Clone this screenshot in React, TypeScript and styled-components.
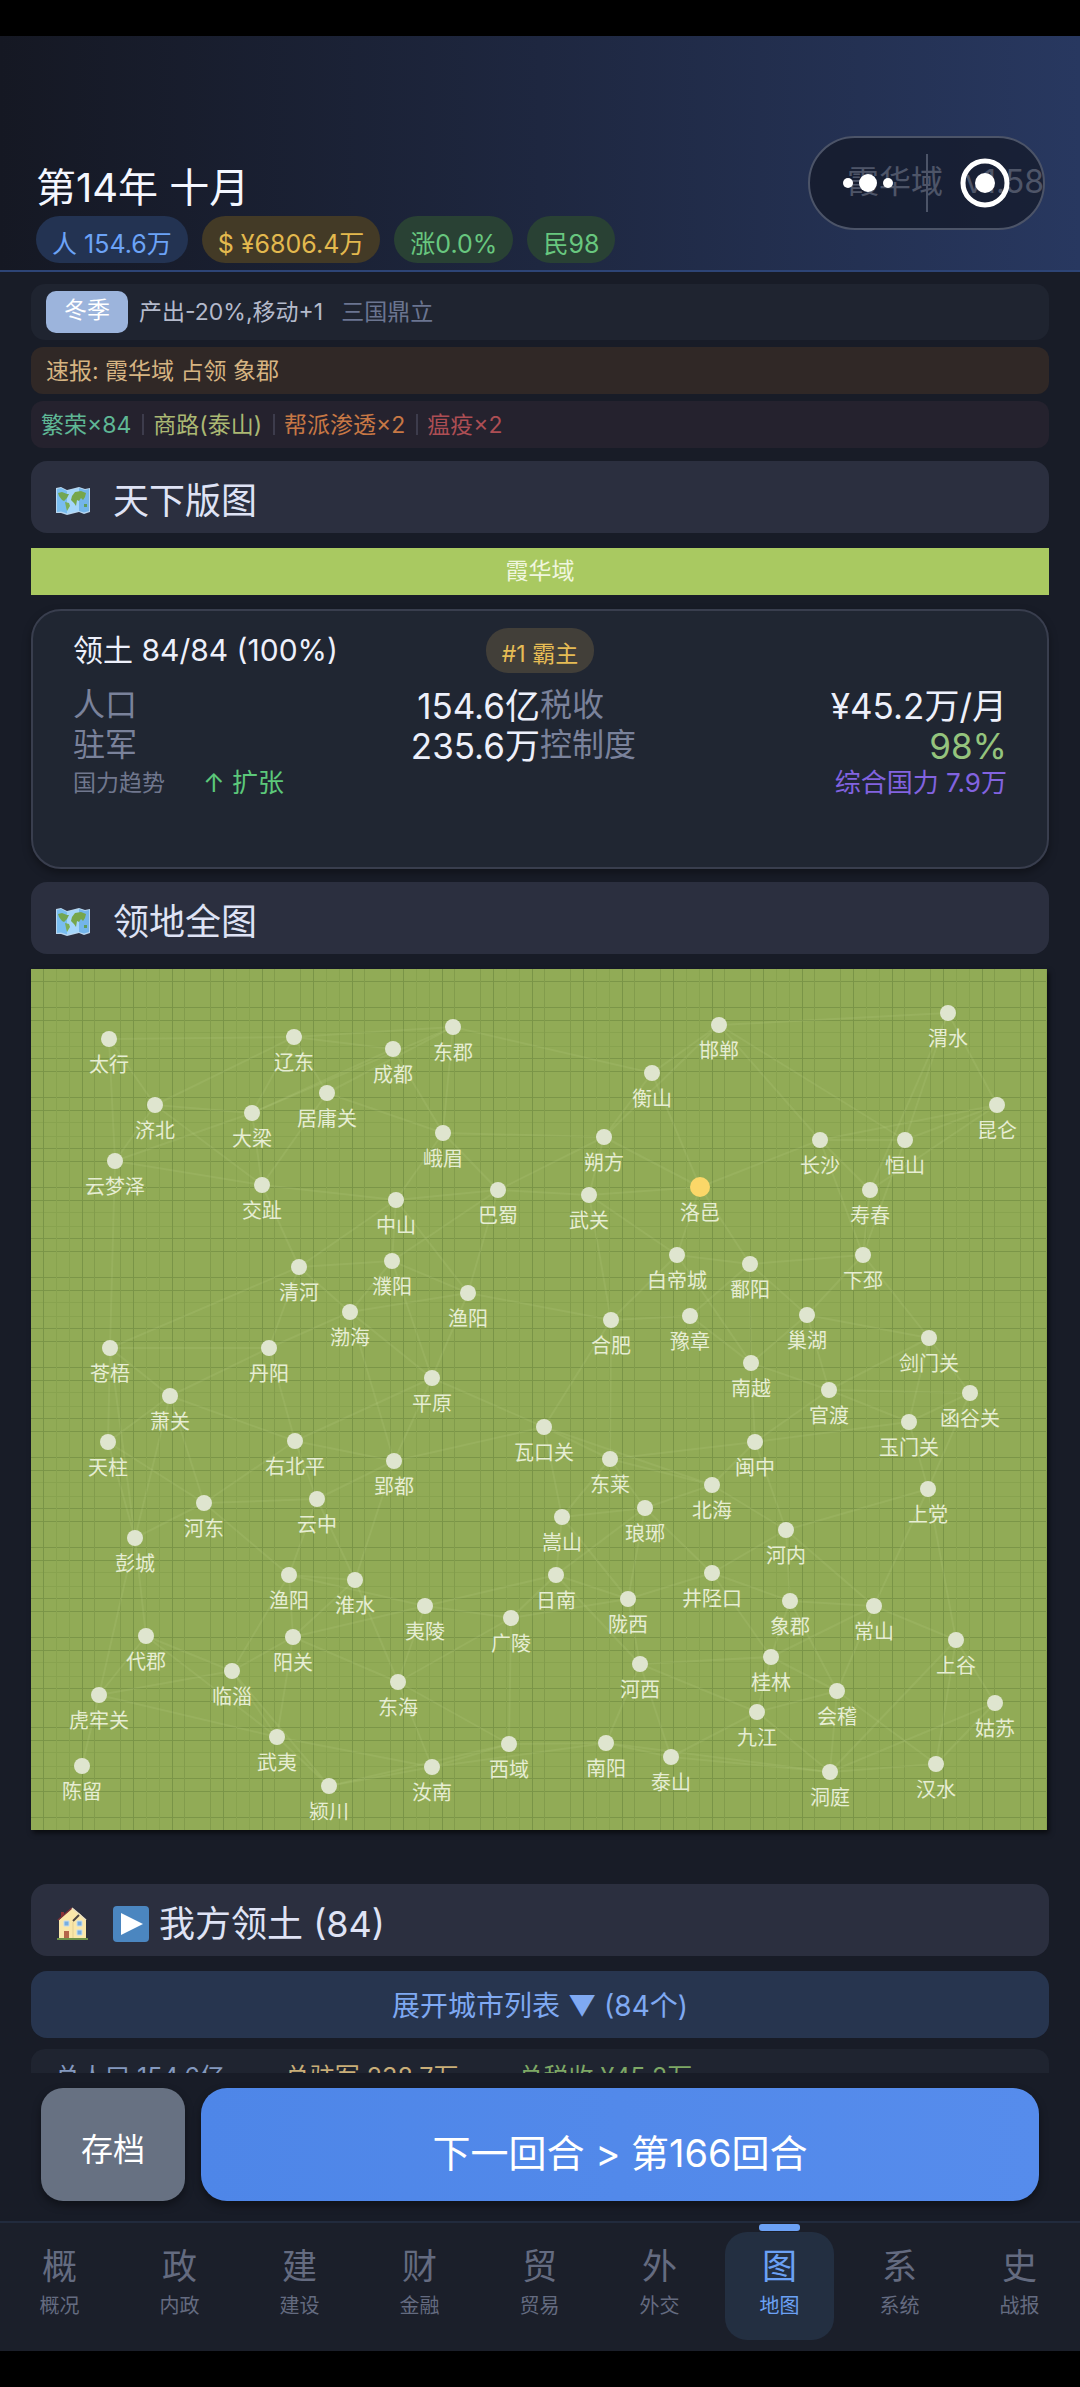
import React from "react";
import styled, { createGlobalStyle } from "styled-components";

const GlobalStyle = createGlobalStyle`
  * { box-sizing: border-box; }
  html, body { margin: 0; background: #000; }
  body, button {
    font-family: Inter, "Noto Sans CJK SC", sans-serif;
    font-weight: 400;
  }
  button { border: 0; padding: 0; cursor: pointer; }
`;

const Screen = styled.div`
  display: flex;
  flex-direction: column;
  height: 100vh;
  padding: 36px 0;
  background: #000;
  color: #e2e6f4;
`;

const Header = styled.header`
  position: relative;
  flex: none;
  display: flex;
  flex-direction: column;
  padding: 126px 36px 7px;
  background: linear-gradient(90deg, #151823 0%, #1e2740 50%, #283860 100%);
  border-bottom: 2px solid #2d4475;
`;

const TitleRow = styled.div`
  display: flex;
  justify-content: space-between;
  align-items: flex-start;
  height: 54px;
`;

const Title = styled.h1`
  margin: 0;
  font-size: 40px;
  line-height: 52px;
  font-weight: 400;
  color: #f4f7ff;
`;

const Realm = styled.div`
  display: flex;
  gap: 22px;
  font-size: 32px;
  line-height: 40px;
  color: #acb9da;
`;

const Pills = styled.div`
  display: flex;
  gap: 14px;
`;

const Pill = styled.span<{ $fg: string; $bg: string }>`
  height: 47px;
  padding: 8px 16px 0;
  border-radius: 24px;
  font-size: 25px;
  line-height: 40px;
  white-space: nowrap;
  color: ${(p) => p.$fg};
  background: ${(p) => p.$bg};
`;

const Capsule = styled.div`
  position: absolute;
  top: 100px;
  right: 35px;
  display: flex;
  align-items: center;
  width: 237px;
  height: 94px;
  border: 2px solid #4c5468;
  border-radius: 47px;
  background: rgba(15, 18, 28, 0.6);
`;

const CapsuleButton = styled.button`
  flex: 1;
  display: flex;
  justify-content: center;
  height: 58px;
  align-items: center;
  background: none;
  & + & {
    border-left: 2px solid #4c5468;
  }
`;

const Main = styled.main`
  flex: 1;
  min-height: 0;
  overflow-y: auto;
  scrollbar-width: none;
  padding: 12px 31px 0;
  background: #181c27;
`;

const Notices = styled.div`
  display: flex;
  flex-direction: column;
  gap: 7px;
`;

const Notice = styled.div<{ $bg: string; $pad?: number }>`
  display: flex;
  align-items: center;
  min-height: 47px;
  padding: 0 ${(p) => p.$pad ?? 15}px;
  border-radius: 12px;
  font-size: 23px;
  line-height: 32px;
  background: ${(p) => p.$bg};
`;

const SeasonNotice = styled(Notice)`
  min-height: 56px;
  border-radius: 14px;
`;

const SeasonBadge = styled.span`
  height: 42px;
  margin-right: 11px;
  padding: 0 18px;
  border-radius: 10px;
  line-height: 38px;
  color: #fff;
  background: #9cb4dc;
`;

const Tint = styled.span<{ $c: string }>`
  color: ${(p) => p.$c};
  white-space: nowrap;
`;

const Era = styled(Tint)`
  margin-left: 18px;
`;

const EventList = styled.ul`
  display: flex;
  margin: 0;
  padding: 0;
  list-style: none;
  & > li + li::before {
    content: "";
    width: 2px;
    height: 21px;
    margin: 0 9px 0 11px;
    background: #3d3c4c;
  }
`;

const EventItem = styled.li<{ $c: string }>`
  display: flex;
  align-items: center;
  white-space: nowrap;
  color: ${(p) => p.$c};
`;

const SectionHead = styled.h2<{ $top?: number }>`
  display: flex;
  align-items: center;
  height: 72px;
  margin: ${(p) => p.$top ?? 13}px 0 15px;
  padding: 7px 24px 0;
  border-radius: 16px;
  font-size: 36px;
  line-height: 48px;
  font-weight: 400;
  color: #dfe3f5;
  background: #2b2f3f;
  & > svg:first-child {
    flex: none;
    margin-right: 22px;
  }
`;

const PlayIcon = styled.svg`
  flex: none;
  margin-right: 10px;
`;

const ShareBar = styled.div`
  height: 47px;
  text-align: center;
  font-size: 23px;
  line-height: 46px;
  color: #f0f6de;
  background: #a9c961;
`;

const Card = styled.section`
  margin: 14px 0 13px;
  padding: 16px 40px 66px;
  border: 2px solid #393e4e;
  border-radius: 30px;
  background: #202632;
  box-shadow: 0 4px 8px rgba(0, 0, 0, 0.35);
`;

const CardTop = styled.div`
  display: grid;
  grid-template-columns: 1fr auto 1fr;
  align-items: center;
  height: 46px;
`;

const CardTitle = styled.h3`
  margin: 0;
  font-size: 30px;
  line-height: 40px;
  font-weight: 400;
  color: #edf0fb;
`;

const RankBadge = styled.span`
  height: 45px;
  padding: 7px 16px 0;
  border-radius: 22px;
  font-size: 23px;
  line-height: 38px;
  color: #e6bc55;
  background: #423f39;
`;

const Stats = styled.dl`
  display: grid;
  grid-template-columns: 1fr 1fr;
  margin: 12px 0 0;
`;

const Stat = styled.div`
  display: flex;
  justify-content: space-between;
  align-items: center;
  height: 40px;
`;

const StatName = styled.dt`
  font-size: 32px;
  line-height: 40px;
  color: #7a829b;
`;

const StatValue = styled.dd<{ $c?: string }>`
  margin: 2px 0 0;
  font-size: 35px;
  line-height: 40px;
  color: ${(p) => p.$c ?? "#edf0fb"};
`;

const Trend = styled.div`
  display: flex;
  align-items: center;
  height: 36px;
  font-size: 26px;
  line-height: 36px;
`;

const TrendName = styled.span`
  margin-right: 38px;
  font-size: 23px;
  color: #70778e;
`;

const Power = styled.span`
  margin-left: auto;
  color: #8263e0;
`;

const MapBoard = styled.div`
  position: relative;
  margin-right: 2px;
  aspect-ratio: 1016 / 861;
  background-color: #91ab56;
  background-image: linear-gradient(
      90deg,
      #799447 0 1px, transparent 1px 13px,
      #88a34f 13px 14px, transparent 14px 26px,
      #88a34f 26px 27px, transparent 27px 39px,
      #799447 39px 40px, transparent 40px 51px,
      #829c4c 51px 52px, transparent 52px 77px,
      #829c4c 77px 78px, transparent 78px
    ),
    linear-gradient(
      #7b9648 0 1px, transparent 1px 26px,
      #7b9648 26px 27px, transparent 27px 39px,
      #7b9648 39px 40px, transparent 40px 51px,
      #88a34f 51px 52px, transparent 52px 65px,
      #88a34f 65px 66px, transparent 66px 77px,
      #7b9648 77px 78px, transparent 78px
    );
  background-size: 90px 90px;
  background-position: 12px 12px;
  box-shadow: 2px 3px 5px rgba(0, 0, 0, 0.6);
`;

const Routes = styled.svg`
  position: absolute;
  inset: 0;
  width: 100%;
  height: 100%;
`;

const Pin = styled.div<{ $capital: boolean }>`
  position: absolute;
  width: 80px;
  height: 20px;
  margin: -10px 0 0 -40px;
  font-size: 20px;
  line-height: 28px;
  text-align: center;
  color: #e6edd3;
  &::before {
    content: "";
    display: block;
    width: ${(p) => (p.$capital ? 20 : 16)}px;
    height: ${(p) => (p.$capital ? 20 : 16)}px;
    margin: ${(p) => (p.$capital ? "0 auto 2px" : "2px auto 4px")};
    border-radius: 50%;
    background: ${(p) => (p.$capital ? "#fbd768" : "#dfe5cf")};
  }
`;

const ExpandButton = styled.button`
  display: block;
  width: 100%;
  height: 67px;
  padding-top: 2px;
  border-radius: 16px;
  font-size: 28px;
  line-height: 40px;
  color: #7fa9f2;
  background: #27354f;
`;

const Totals = styled.div`
  display: flex;
  gap: 60px;
  margin-top: 11px;
  padding: 8px 24px;
  border-radius: 14px;
  font-size: 25px;
  line-height: 40px;
  background: #1f2430;
`;

const Actions = styled.div`
  flex: none;
  display: flex;
  gap: 16px;
  padding: 15px 41px 20px;
  background: #181c27;
`;

const SaveButton = styled.button`
  width: 144px;
  height: 113px;
  padding-top: 5px;
  border-radius: 22px;
  font-size: 32px;
  color: #fff;
  background: #677182;
  box-shadow: 0 4px 8px rgba(0, 0, 0, 0.4);
`;

const NextButton = styled(SaveButton)`
  flex: 1;
  padding-top: 11px;
  border-radius: 26px;
  font-size: 38px;
  background: linear-gradient(90deg, #4e86e8, #568cec);
`;

const Nav = styled.nav`
  flex: none;
  display: flex;
  height: 130px;
  border-top: 2px solid #222b3d;
  background: #1b1f2a;
`;

const Tab = styled.a<{ $active: boolean }>`
  position: relative;
  flex: 1;
  display: flex;
  flex-direction: column;
  align-items: center;
  gap: 2px;
  height: 108px;
  margin: 9px 6px 0 5px;
  padding-top: 10px;
  border-radius: 22px;
  text-decoration: none;
  font-size: 20px;
  line-height: 28px;
  color: ${(p) => (p.$active ? "#6ba1f5" : "#646b80")};
  background: ${(p) => (p.$active ? "#232f41" : "none")};
  &::before {
    content: "";
    display: ${(p) => (p.$active ? "block" : "none")};
    position: absolute;
    top: -8px;
    width: 41px;
    height: 7px;
    border-radius: 3px;
    background: #6ba1f5;
  }
`;

const TabGlyph = styled.span`
  font-size: 35px;
  line-height: 48px;
`;

type City = [key: string, x: number, y: number];

/* Board coordinates on a 1016 x 861 grid; a trailing digit tells apart two cities of one name. */
const BOARD_W = 1016;
const BOARD_H = 861;
const CAPITAL = "洛邑";
const CITIES: City[] = [
  ["太行", 78, 70], ["辽东", 263, 68], ["成都", 362, 80], ["东郡", 422, 58],
  ["济北", 124, 136], ["大梁", 221, 144], ["居庸关", 296, 124], ["峨眉", 412, 164],
  ["云梦泽", 84, 192], ["交趾", 231, 216], ["中山", 365, 231], ["巴蜀", 467, 221],
  ["清河", 268, 298], ["濮阳", 361, 292], ["渔阳", 437, 324], ["渤海", 319, 343],
  ["苍梧", 79, 379], ["丹阳", 238, 379], ["平原", 401, 409], ["萧关", 139, 427],
  ["邯郸", 688, 56], ["渭水", 917, 44], ["衡山", 621, 104], ["昆仑", 966, 136],
  ["朔方", 573, 168], ["长沙", 789, 171], ["恒山", 874, 171], ["武关", 558, 226],
  ["洛邑", 669, 218], ["寿春", 839, 221], ["白帝城", 646, 286], ["鄱阳", 719, 295],
  ["下邳", 832, 286], ["合肥", 580, 351], ["豫章", 659, 347], ["巢湖", 776, 346],
  ["南越", 720, 394], ["剑门关", 898, 369], ["官渡", 798, 421], ["函谷关", 939, 424],
  ["瓦口关", 513, 458], ["天柱", 77, 473], ["右北平", 264, 472], ["郢都", 363, 492],
  ["河东", 173, 534], ["云中", 286, 530], ["彭城", 104, 569], ["渔阳2", 258, 606],
  ["淮水", 324, 611], ["夷陵", 394, 637], ["广陵", 480, 649], ["代郡", 115, 667],
  ["阳关", 262, 668], ["临淄", 201, 702], ["虎牢关", 68, 726], ["东海", 367, 713],
  ["武夷", 246, 768], ["陈留", 51, 797], ["颍川", 298, 817], ["汝南", 401, 798],
  ["西域", 478, 775], ["东莱", 579, 490], ["闽中", 724, 473], ["玉门关", 878, 453],
  ["北海", 681, 516], ["上党", 897, 520], ["琅琊", 614, 539], ["嵩山", 531, 548],
  ["河内", 755, 561], ["日南", 525, 606], ["井陉口", 681, 604], ["陇西", 597, 630],
  ["象郡", 759, 632], ["常山", 843, 637], ["上谷", 925, 671], ["河西", 609, 695],
  ["桂林", 740, 688], ["会稽", 806, 722], ["九江", 726, 743], ["姑苏", 964, 734],
  ["南阳", 575, 774], ["泰山", 640, 788], ["洞庭", 799, 803], ["汉水", 905, 795],
];

const ROUTES = `太行-辽东 太行-济北 太行-云梦泽 济北-辽东 济北-大梁 济北-云梦泽 济北-交趾 大梁-辽东
大梁-东郡 大梁-成都 大梁-交趾 大梁-云梦泽 云梦泽-交趾 云梦泽-苍梧 辽东-东郡 辽东-成都 辽东-居庸关
居庸关-东郡 居庸关-峨眉 居庸关-交趾 成都-峨眉 东郡-峨眉 东郡-衡山 峨眉-中山 峨眉-巴蜀 峨眉-朔方
交趾-中山 交趾-清河 中山-巴蜀 中山-清河 中山-濮阳 中山-渔阳 巴蜀-朔方 巴蜀-濮阳 巴蜀-渔阳 巴蜀-武关
清河-濮阳 清河-渤海 清河-苍梧 清河-丹阳 濮阳-渤海 濮阳-渔阳 濮阳-平原 渤海-渔阳 渤海-丹阳 渤海-平原
渤海-郢都 渔阳-平原 渔阳-合肥 苍梧-丹阳 苍梧-萧关 苍梧-天柱 苍梧-彭城 丹阳-萧关 丹阳-右北平 平原-右北平
平原-郢都 平原-瓦口关 萧关-天柱 萧关-右北平 萧关-河东 萧关-彭城 天柱-河东 天柱-彭城 右北平-河东
右北平-郢都 右北平-云中 郢都-瓦口关 郢都-云中 郢都-淮水 河东-云中 河东-彭城 河东-渔阳2 云中-渔阳2
云中-淮水 彭城-代郡 彭城-虎牢关 渔阳2-淮水 渔阳2-夷陵 渔阳2-阳关 渔阳2-临淄 淮水-阳关 淮水-东海
夷陵-日南 夷陵-广陵 夷陵-阳关 夷陵-东海 广陵-日南 广陵-东海 广陵-西域 广陵-陇西 代郡-临淄 代郡-虎牢关
代郡-武夷 临淄-阳关 临淄-虎牢关 临淄-武夷 阳关-东海 阳关-武夷 虎牢关-陈留 虎牢关-武夷 武夷-颍川
武夷-汝南 颍川-汝南 颍川-西域 汝南-东海 汝南-西域 东海-西域 临淄-颍川 西域-南阳 汝南-南阳
邯郸-渭水 邯郸-衡山 邯郸-长沙 邯郸-恒山 邯郸-朔方 衡山-朔方 衡山-洛邑 渭水-恒山 渭水-寿春 渭水-昆仑
昆仑-恒山 昆仑-长沙 昆仑-寿春 长沙-恒山 长沙-寿春 长沙-洛邑 长沙-下邳 恒山-下邳 寿春-下邳 朔方-武关
朔方-洛邑 武关-洛邑 武关-白帝城 武关-合肥 洛邑-白帝城 洛邑-鄱阳 白帝城-鄱阳 白帝城-合肥 白帝城-南越
鄱阳-下邳 鄱阳-豫章 鄱阳-巢湖 鄱阳-南越 下邳-巢湖 下邳-剑门关 合肥-豫章 合肥-瓦口关 豫章-南越 巢湖-剑门关
巢湖-南越 巢湖-官渡 南越-官渡 南越-闽中 剑门关-官渡 剑门关-玉门关 剑门关-函谷关 官渡-函谷关 官渡-玉门关
官渡-闽中 函谷关-玉门关 函谷关-上党 玉门关-闽中 玉门关-上党 瓦口关-东莱 瓦口关-嵩山 瓦口关-北海 合肥-东莱
东莱-闽中 东莱-北海 东莱-琅琊 东莱-嵩山 闽中-北海 闽中-河内 北海-琅琊 北海-河内 琅琊-嵩山 琅琊-日南
琅琊-陇西 琅琊-井陉口 嵩山-日南 嵩山-陇西 河内-上党 河内-井陉口 河内-常山 河内-象郡 上党-常山 上党-上谷
日南-陇西 日南-河西 陇西-井陉口 陇西-河西 井陉口-象郡 井陉口-桂林 象郡-常山 象郡-桂林 象郡-会稽 常山-上谷
常山-桂林 常山-会稽 上谷-姑苏 上谷-洞庭 上谷-汉水 河西-桂林 河西-九江 河西-南阳 河西-泰山 桂林-会稽
桂林-九江 会稽-九江 会稽-洞庭 会稽-汉水 九江-泰山 九江-洞庭 南阳-泰山 南阳-洞庭 泰山-洞庭 洞庭-汉水
姑苏-汉水 姑苏-洞庭`
  .split(/\s+/)
  .map((r) => r.split("-").map((k) => CITIES.find((c) => c[0] === k)!));

const TABS = ["概概况", "政内政", "建建设", "财金融", "贸贸易", "外外交", "图地图", "系系统", "史战报"];

const MapIcon = () => (
  <svg width="36" height="30" viewBox="0 0 36 30" aria-hidden="true">
    <path d="M1 2 L6 1 L12 4 L24 1 L30 3 L35 2 V26 L29 28 L24 26 L12 29 L6 27 L1 27Z" fill="#b9d6ee" />
    <path d="M2 3 L6 2 L12 5 V27.500 L6 25.500 L2 26Z" fill="#79bdf0" />
    <path d="M12 5 L24 2 V25 L12 27.500Z" fill="#a5d6fb" />
    <path d="M24 2 L30 4 L34 3 V25 L29 26.500 L24 25Z" fill="#74b5ea" />
    <path d="M3 7 L7 6 L12 8 L14 8 L12 12 L9 15 L7 14 L4 10Z" fill="#72a653" />
    <path d="M10 16 L14 17 L15 20 L12 25 L11 21Z" fill="#7cae57" />
    <path d="M17 10 L20 6 L26 5 L31 7 L30 11 L28 14 L26 12 L24 15 L22 14 L21 20 L19 17 L16 14Z" fill="#77a64b" />
    <path d="M29 18 L32 18 L32 21 L29 21Z" fill="#609d5b" />
  </svg>
);

const HouseIcon = () => (
  <svg width="36" height="36" viewBox="0 0 36 36" aria-hidden="true">
    <path d="M6 6 H9 V12 H6Z" fill="#8c3037" />
    <path d="M4 14 L17 2 L25 8 L31 14 V33 H4Z" fill="#fae7a9" />
    <path d="M3 14 L17 2" stroke="#7a2f38" strokeWidth="1.500" fill="none" />
    <path d="M17 2 L24 8 L31 14" stroke="#e9dfc2" strokeWidth="1.500" fill="none" />
    <path d="M18 15 L24 9" stroke="#4d4644" strokeWidth="2" />
    <path d="M18 16 V33" stroke="#e3cf93" />
    <path d="M9 15h5v5H9zM22 15h5v5h-5zM22 24h5v5h-5z" fill="#78aee0" stroke="#c7dcec" />
    <path d="M9 25h5v8H9z" fill="#b5674a" />
    <path d="M2 32h31v2H2z" fill="#6c9148" />
  </svg>
);

export default function App() {
  return (
    <Screen>
      <GlobalStyle />
      <Header>
        <TitleRow>
          <Title>第14年 十月</Title>
          <Realm>
            <span>霞华域</span>
            <span>v1.58</span>
          </Realm>
        </TitleRow>
        <Pills>
          <Pill $fg="#6ca3f7" $bg="#233352">人 154.6万</Pill>
          <Pill $fg="#e3b94e" $bg="#433a26">$ ¥6806.4万</Pill>
          <Pill $fg="#68c77f" $bg="#294134">涨0.0%</Pill>
          <Pill $fg="#68c77f" $bg="#294134">民98</Pill>
        </Pills>
        <Capsule>
          <CapsuleButton aria-label="更多">
            <svg width="54" height="20" viewBox="0 0 54 20" fill="#fff">
              <circle cx="7" cy="10" r="5" />
              <circle cx="27" cy="10" r="9" />
              <circle cx="47" cy="10" r="5" />
            </svg>
          </CapsuleButton>
          <CapsuleButton aria-label="关闭">
            <svg width="50" height="50" viewBox="0 0 50 50" fill="#fff">
              <circle cx="25" cy="25" r="22" fill="none" stroke="#fff" strokeWidth="5" />
              <circle cx="25" cy="25" r="10" />
            </svg>
          </CapsuleButton>
        </Capsule>
      </Header>

      <Main>
        <Notices>
          <SeasonNotice $bg="#1f2430">
            <SeasonBadge>冬季</SeasonBadge>
            <Tint $c="#b4bacb">产出-20%,移动+1</Tint>
            <Era $c="#6b7590">三国鼎立</Era>
          </SeasonNotice>
          <Notice $bg="#302826">
            <Tint $c="#d6b482">速报: 霞华域 占领 象郡</Tint>
          </Notice>
          <Notice $bg="#25222e" $pad={10}>
            <EventList>
              <EventItem $c="#5fb795">繁荣×84</EventItem>
              <EventItem $c="#abb873">商路(泰山)</EventItem>
              <EventItem $c="#c77845">帮派渗透×2</EventItem>
              <EventItem $c="#ad4e54">瘟疫×2</EventItem>
            </EventList>
          </Notice>
        </Notices>

        <SectionHead>
          <MapIcon />
          天下版图
        </SectionHead>
        <ShareBar>霞华域</ShareBar>
        <Card>
          <CardTop>
            <CardTitle>领土 84/84 (100%)</CardTitle>
            <RankBadge>#1 霸主</RankBadge>
          </CardTop>
          <Stats>
            <Stat>
              <StatName>人口</StatName>
              <StatValue>154.6亿</StatValue>
            </Stat>
            <Stat>
              <StatName>税收</StatName>
              <StatValue>¥45.2万/月</StatValue>
            </Stat>
            <Stat>
              <StatName>驻军</StatName>
              <StatValue>235.6万</StatValue>
            </Stat>
            <Stat>
              <StatName>控制度</StatName>
              <StatValue $c="#94c47d">98%</StatValue>
            </Stat>
          </Stats>
          <Trend>
            <TrendName>国力趋势</TrendName>
            <Tint $c="#5cc87a">↑ 扩张</Tint>
            <Power>综合国力 7.9万</Power>
          </Trend>
        </Card>

        <SectionHead>
          <MapIcon />
          领地全图
        </SectionHead>
        <MapBoard>
          <Routes viewBox={`0 0 ${BOARD_W} ${BOARD_H}`} preserveAspectRatio="none" aria-hidden="true">
            {ROUTES.map(([a, b], i) => (
              <line key={i} x1={a[1]} y1={a[2]} x2={b[1]} y2={b[2]} stroke="#d8f0a8" strokeOpacity="0.1" strokeWidth="2" />
            ))}
          </Routes>
          {CITIES.map(([key, x, y]) => (
            <Pin
              key={key}
              $capital={key === CAPITAL}
              style={{ left: `${(x / BOARD_W) * 100}%`, top: `${(y / BOARD_H) * 100}%` }}
            >
              {key.replace(/\d/, "")}
            </Pin>
          ))}
        </MapBoard>

        <SectionHead $top={54}>
          <HouseIcon />
          <PlayIcon width="36" height="36" viewBox="0 0 36 36" aria-hidden="true">
            <rect width="36" height="36" rx="4" fill="#4b86c0" />
            <path d="M8 7 L30 18 L8 29Z" fill="#fff" />
          </PlayIcon>
          我方领土 (84)
        </SectionHead>
        <ExpandButton>展开城市列表 ▼ (84个)</ExpandButton>
        <Totals>
          <Tint $c="#8499bf">总人口 154.6亿</Tint>
          <Tint $c="#c9ae78">总驻军 238.7万</Tint>
          <Tint $c="#7ea865">总税收 ¥45.2万</Tint>
        </Totals>
      </Main>

      <Actions>
        <SaveButton>存档</SaveButton>
        <NextButton>下一回合 &gt; 第166回合</NextButton>
      </Actions>
      <Nav>
        {TABS.map((t) => (
          <Tab key={t} href="#" $active={t[0] === "图"} aria-current={t[0] === "图" ? "page" : undefined}>
            <TabGlyph>{t[0]}</TabGlyph>
            {t.slice(1)}
          </Tab>
        ))}
      </Nav>
    </Screen>
  );
}
